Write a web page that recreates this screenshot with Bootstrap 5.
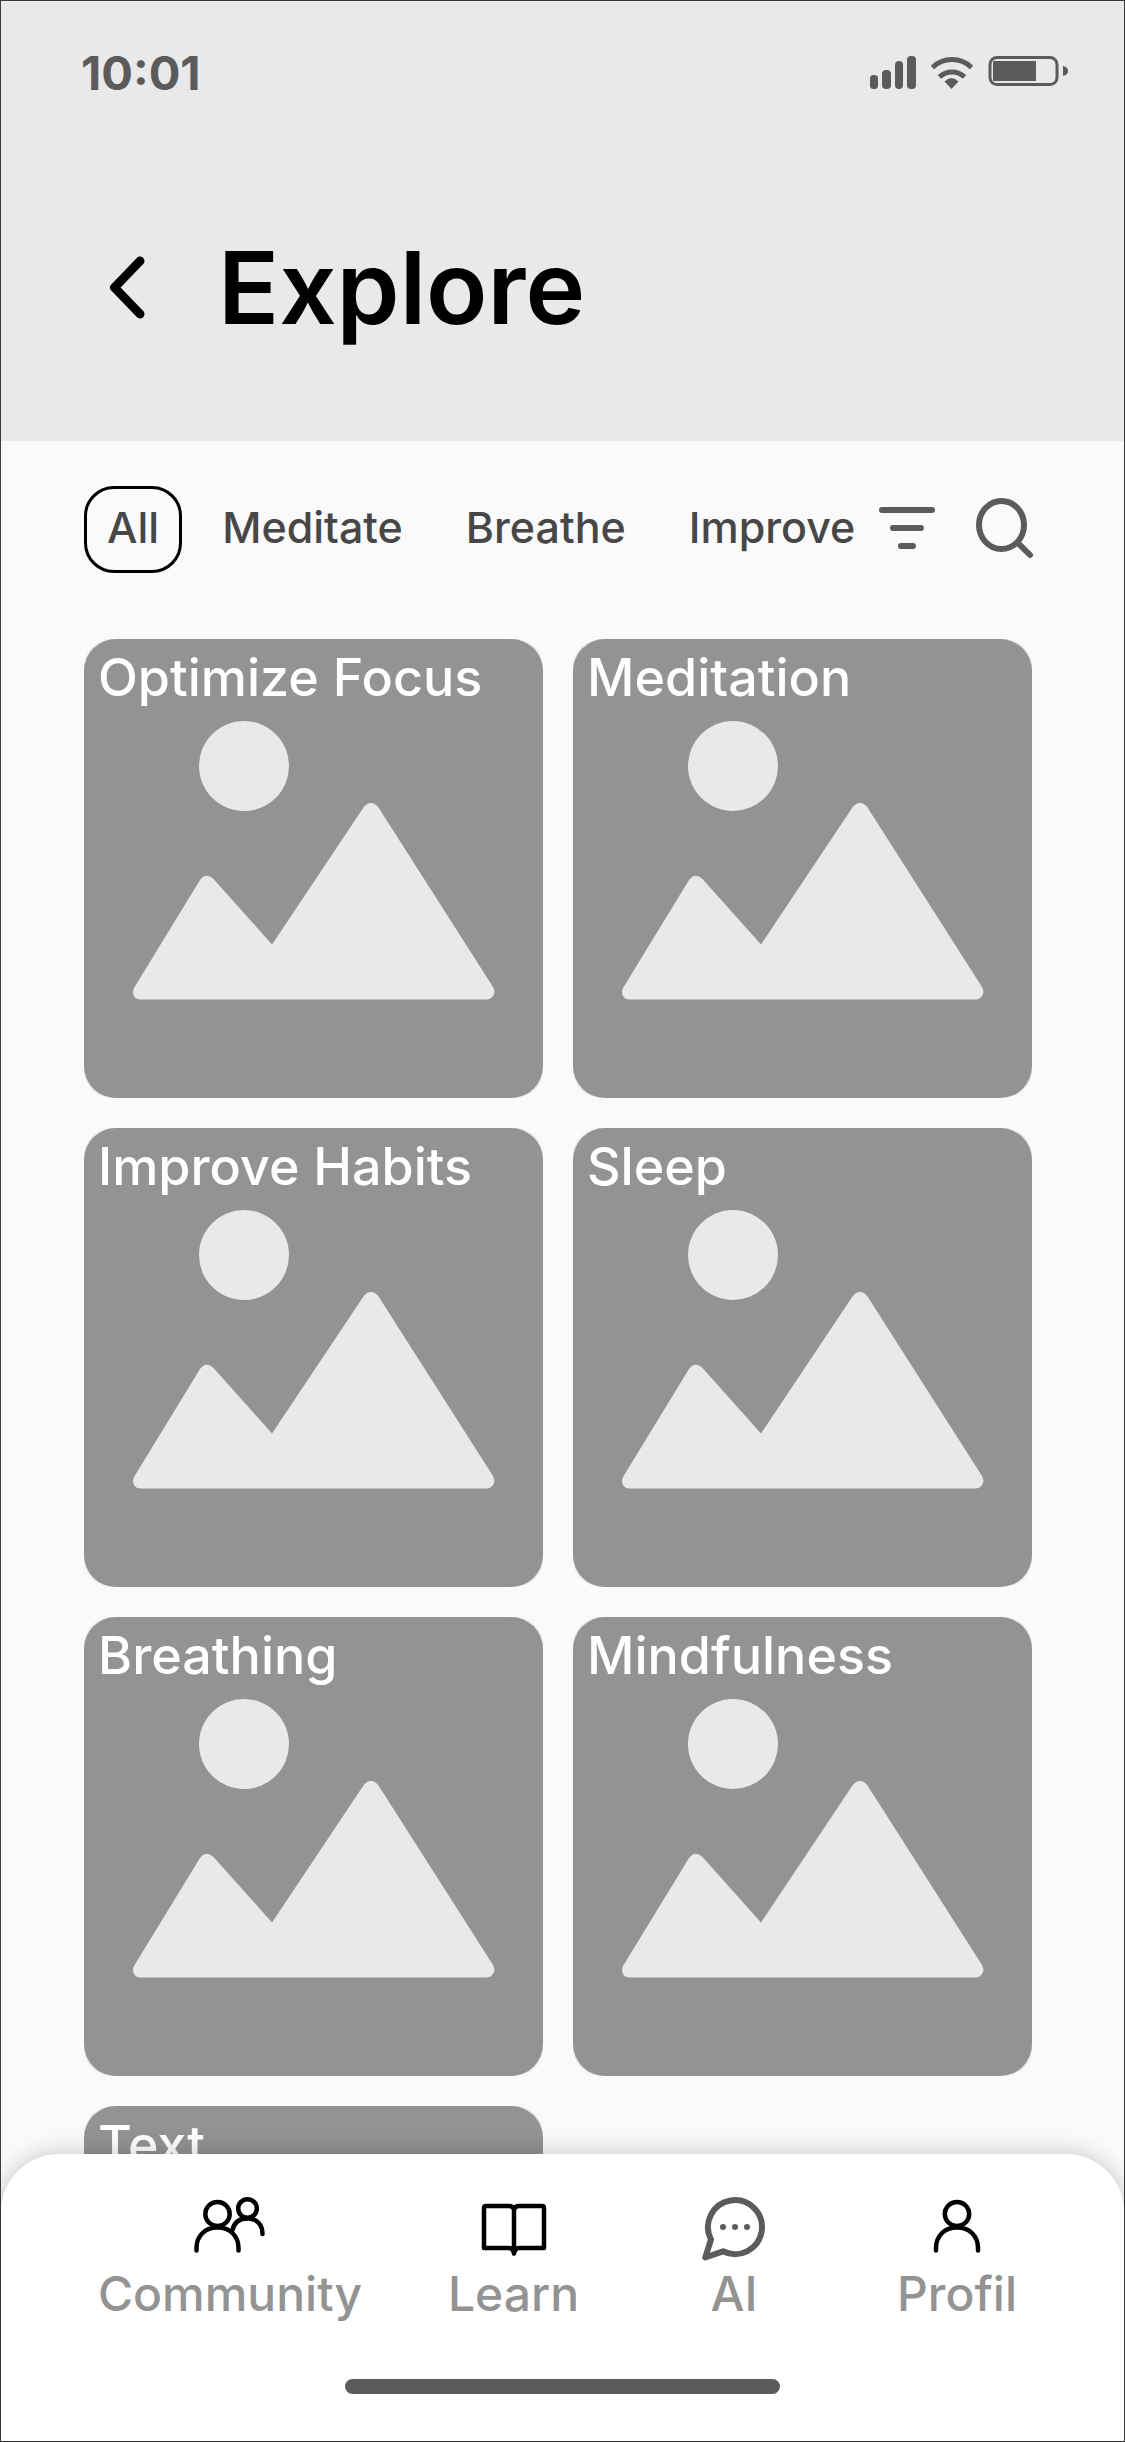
<!DOCTYPE html>
<html lang="en">
<head>
<meta charset="utf-8">
<meta name="viewport" content="width=device-width, initial-scale=1">
<title>Explore</title>
<link href="https://cdn.jsdelivr.net/npm/bootstrap@5.3.0/dist/css/bootstrap.min.css" rel="stylesheet">
<style>
  body { font-family: Inter, "Liberation Sans", sans-serif; font-weight: 500; }
  svg { display: block; flex: none; }
  .app-shell { background: #fafafa; border: 1px solid #3a383a; }
  .app-header { background: #e9e9e9; padding: 42px 56px 94px 80px; }
  .status-bar { height: 60px; color: #5b5b5b; font-size: 47px; line-height: 60px; font-weight: 700; }
  .title-row { margin-top: 124px; padding-left: 22px; gap: 63px; }
  .page-title { font-size: 101px; line-height: 120px; font-weight: 600; color: #000; }
  .content-area { padding: 45px 92px 0 83px; scrollbar-width: none; }
  .content-area::-webkit-scrollbar { display: none; }
  .filter-row { margin-bottom: 66px; }
  .topic-tab { border: 3px solid transparent; border-radius: 30px; height: 87px; padding: 0 20px 6px; font-size: 43px; line-height: 60px; font-weight: 500; color: #474747; background: none; }
  .topic-tab.active { border-color: #000; }
  .tab-list { gap: 17px; }
  .topic-grid { display: grid; grid-template-columns: 1fr 1fr; gap: 30px; }
  .topic-tile { background: #e9e9e9; border-radius: 28px; position: relative; aspect-ratio: 1; text-decoration: none; color: #fff; }
  .topic-tile svg { width: 100%; height: 100%; border-radius: 32px; background: #939393; }
  .topic-tile h2 { position: absolute; top: 9px; left: 14px; margin: 0; font-size: 52px; line-height: 60px; font-weight: 500; }
  .bottom-bar { background: #fff; border-radius: 58px 58px 0 0; padding: 41px 0 47px; box-shadow: 0 0 24px rgba(0,0,0,.22); }
  .nav-items { display: grid; grid-template-columns: 280fr 287fr 154fr 292fr; padding: 0 21px 0 89px; }
  .nav-entry { color: #939393; font-size: 48px; line-height: 62px; text-decoration: none; }
  .home-indicator { width: 435px; height: 15px; border-radius: 8px; background: #5b5b5b; margin-top: 54px; }
</style>
</head>
<body>
<div class="app-shell vh-100 d-flex flex-column position-relative overflow-hidden">
  <header class="app-header">
    <div class="status-bar d-flex justify-content-between align-items-center">
      <span>10:01</span>
      <svg width="198" height="34" viewBox="870 57 198 34" fill="#5b5b5b" aria-hidden="true">
        <rect x="870" y="76" width="8" height="14" rx="3.5"/><rect x="882" y="71" width="9" height="19" rx="4"/><rect x="895" y="62" width="8" height="28" rx="4"/><rect x="907" y="57" width="9" height="33" rx="4"/>
        <path d="M932.500 68.500a28 28 0 0 1 39 0" fill="none" stroke="#5b5b5b" stroke-width="5"/>
        <path d="M939.500 78a18 18 0 0 1 25 0" fill="none" stroke="#5b5b5b" stroke-width="5"/>
        <path d="M944.500 82.500Q951.500 75.500 958.500 82.500L951.500 90z"/>
        <rect x="990" y="58.500" width="67" height="27" rx="7" fill="none" stroke="#5b5b5b" stroke-width="3"/>
        <path d="M994 62h42v20h-42q-1 0-1-1V63q0-1 1-1zM1063 67q5 1 5 5t-5 5z"/>
      </svg>
    </div>
    <div class="title-row d-flex align-items-center">
      <button type="button" class="btn p-0 border-0" aria-label="Back">
        <svg width="52" height="64" viewBox="0 0 52 64" fill="none" stroke="#000" stroke-width="9" stroke-linecap="round" stroke-linejoin="round"><path d="M37 6L11.500 32.500L37 59"/></svg>
      </button>
      <h1 class="page-title m-0">Explore</h1>
    </div>
  </header>

  <main class="content-area flex-grow-1 overflow-auto">
    <div class="filter-row d-flex align-items-center justify-content-between">
      <div class="tab-list d-flex" role="group" aria-label="Topics">
        <button type="button" class="topic-tab active" aria-pressed="true">All</button>
        <button type="button" class="topic-tab">Meditate</button>
        <button type="button" class="topic-tab">Breathe</button>
        <button type="button" class="topic-tab pe-0">Improve</button>
      </div>
      <div class="d-flex align-items-center">
        <button type="button" class="btn p-0 border-0" aria-label="Filter">
          <svg width="97" height="64" viewBox="877 498 97 64" fill="none" stroke="#5b5b5b" stroke-width="6" stroke-linecap="round"><path d="M882 510h50M893 528h28M901 546h12"/></svg>
        </button>
        <button type="button" class="btn p-0 border-0" aria-label="Search">
          <svg width="58" height="64" viewBox="974 498 58 64" fill="none" stroke="#5b5b5b" stroke-width="6" stroke-linecap="round" overflow="visible"><ellipse cx="1001.500" cy="525" rx="22.500" ry="24"/><path d="M1018 543l12 12"/></svg>
        </button>
      </div>
    </div>

    <svg width="0" height="0" class="position-absolute" aria-hidden="true">
      <symbol id="landscape" viewBox="0 0 459 459">
        <circle cx="160" cy="127" r="45"/>
        <path d="M50 349L116 241Q122 233 129.500 240L188 305.500L280.300 167.300Q287 160 293.700 167.300L408.700 347.500Q412 353 409 357Q406.500 360.500 402 360.500H57Q52 360.500 50 357Q48 353 50 349z"/>
      </symbol>
    </svg>
    <section class="topic-grid">
      <a href="#" class="topic-tile"><svg fill="#e9e9e9"><use href="#landscape"/></svg><h2>Optimize Focus</h2></a>
      <a href="#" class="topic-tile"><svg fill="#e9e9e9"><use href="#landscape"/></svg><h2>Meditation</h2></a>
      <a href="#" class="topic-tile"><svg fill="#e9e9e9"><use href="#landscape"/></svg><h2>Improve Habits</h2></a>
      <a href="#" class="topic-tile"><svg fill="#e9e9e9"><use href="#landscape"/></svg><h2>Sleep</h2></a>
      <a href="#" class="topic-tile"><svg fill="#e9e9e9"><use href="#landscape"/></svg><h2>Breathing</h2></a>
      <a href="#" class="topic-tile"><svg fill="#e9e9e9"><use href="#landscape"/></svg><h2>Mindfulness</h2></a>
      <a href="#" class="topic-tile"><svg fill="#e9e9e9"><use href="#landscape"/></svg><h2>Text</h2></a>
    </section>
  </main>

  <nav class="bottom-bar position-absolute bottom-0 start-0 end-0" aria-label="Main">
    <div class="nav-items">
      <a href="#" class="nav-entry d-flex flex-column align-items-center">
        <svg width="80" height="68" viewBox="0 0 80 68" fill="none" stroke="#000" stroke-width="4.500" stroke-linecap="round"><ellipse cx="27.500" cy="19" rx="12.200" ry="12"/><path d="M6.500 55.500V53C6.500 41 15 32.500 27.500 32.500S48.500 41 48.500 53v2.500"/><circle cx="57.500" cy="13.500" r="9.300"/><path d="M42.500 35C44 28 49 23.500 57.500 23.500c10 0 15 7 15 15.500"/></svg>
        <span>Community</span>
      </a>
      <a href="#" class="nav-entry d-flex flex-column align-items-center">
        <svg width="68" height="68" viewBox="0 0 68 68" fill="none" stroke="#000" stroke-width="4.500" stroke-linecap="round" stroke-linejoin="round"><path d="M34 14.500Q33 11 29 11H6Q4 11 4 13V53H29Q33 53 34 58.500Q35 53 39 53H64V13Q64 11 62 11H39Q35 11 34 14.500V58"/></svg>
        <span>Learn</span>
      </a>
      <a href="#" class="nav-entry d-flex flex-column align-items-center">
        <svg width="68" height="68" viewBox="0 0 68 68" fill="none" stroke="#5b5b5b" stroke-width="6" stroke-linejoin="round"><path d="M23 56.300L5.300 62.500L11 44.500A27 27 0 1 1 23 56.300z"/><g fill="#5b5b5b" stroke="none"><circle cx="23" cy="32" r="3"/><circle cx="35" cy="32" r="3"/><circle cx="47" cy="32" r="3"/></g></svg>
        <span>AI</span>
      </a>
      <a href="#" class="nav-entry d-flex flex-column align-items-center">
        <svg width="68" height="68" viewBox="0 0 68 68" fill="none" stroke="#000" stroke-width="4.500" stroke-linecap="round"><ellipse cx="34" cy="19" rx="12.200" ry="12"/><path d="M13 55.500V53C13 41 21.500 32.500 34 32.500S55 41 55 53v2.500"/></svg>
        <span>Profil</span>
      </a>
    </div>
    <div class="home-indicator mx-auto"></div>
  </nav>
</div>
<script src="https://cdn.jsdelivr.net/npm/bootstrap@5.3.0/dist/js/bootstrap.bundle.min.js"></script>
</body>
</html>
